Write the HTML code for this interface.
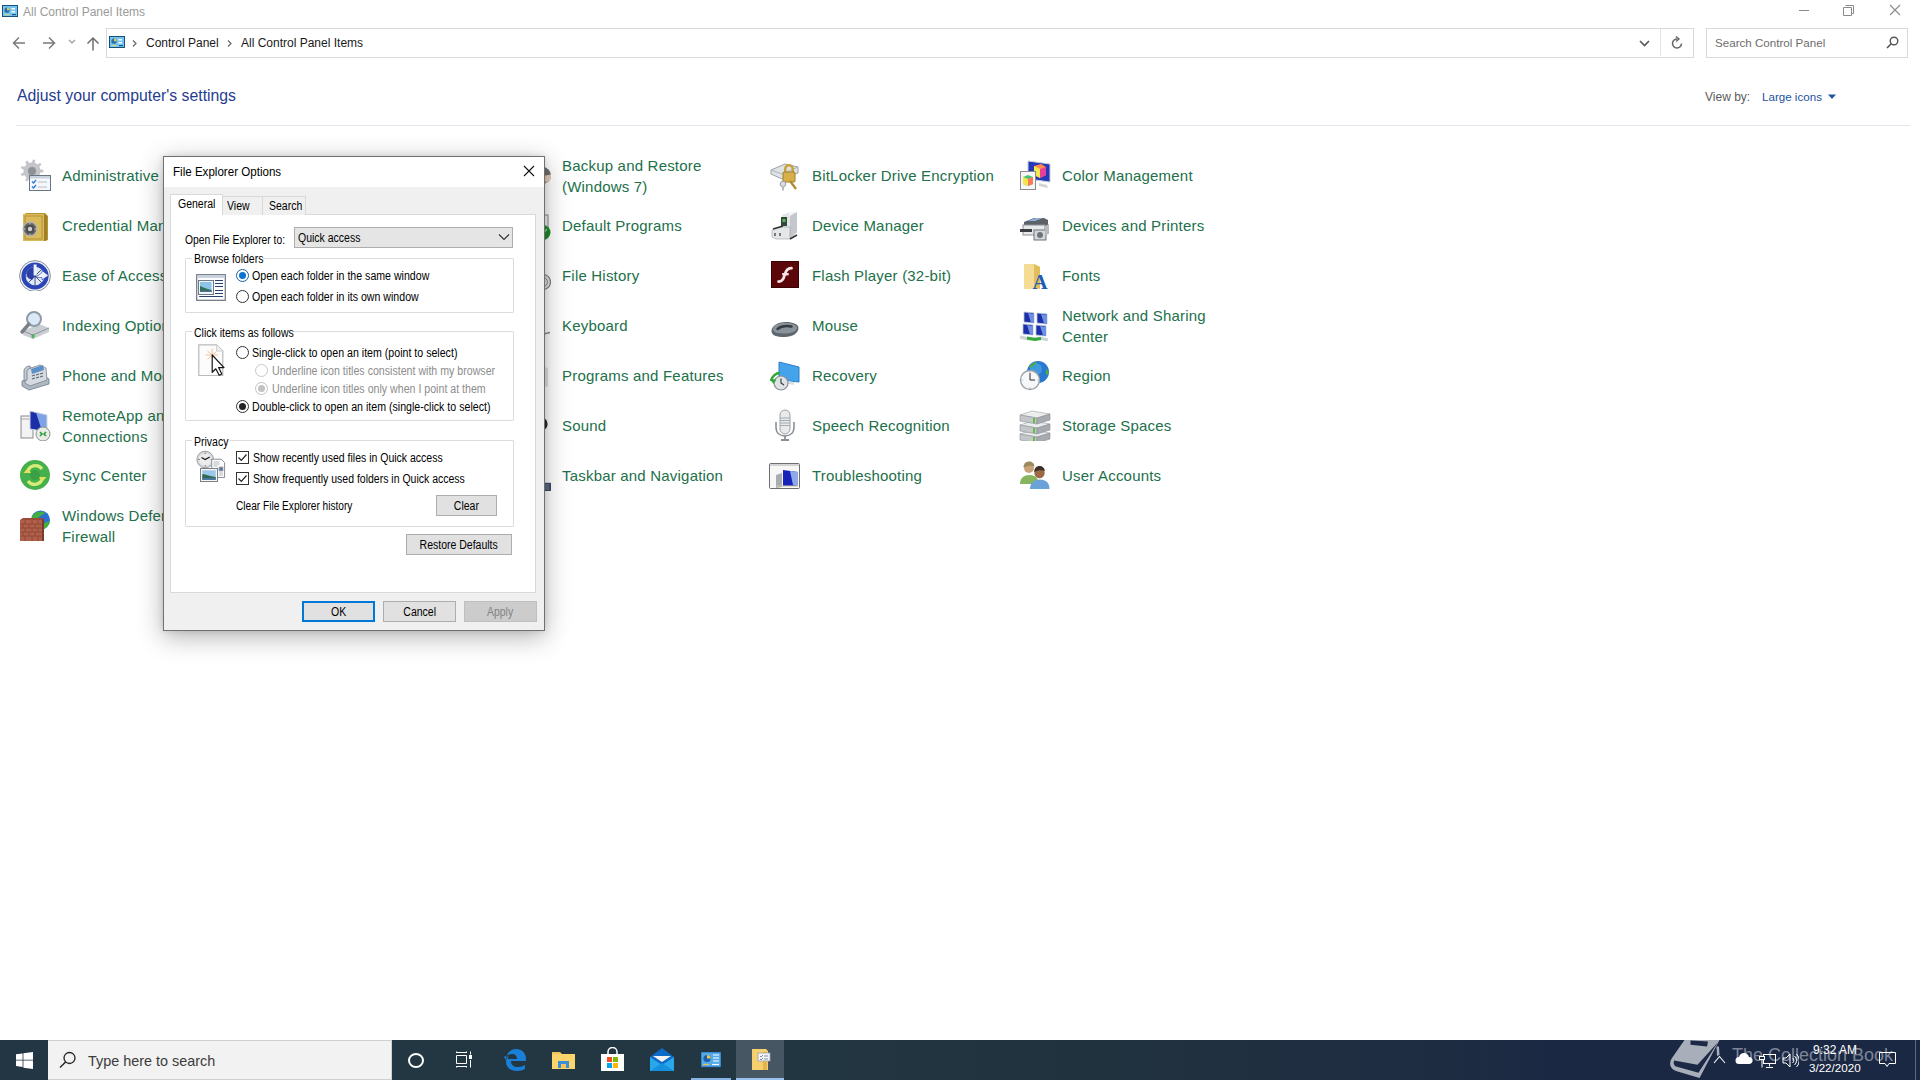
<!DOCTYPE html>
<html><head><meta charset="utf-8">
<style>
*{margin:0;padding:0;box-sizing:border-box}
html,body{width:1920px;height:1080px;overflow:hidden;background:#fff;font-family:"Liberation Sans",sans-serif;position:relative}
.a{position:absolute}
.nw{white-space:nowrap}
/* explorer chrome */
#title{left:23px;top:5px;font-size:12px;color:#9a9a9a}
.crumb{font-size:12px;color:#1a1a1a;top:36px}
#addr{left:106px;top:28px;width:1588px;height:30px;border:1px solid #d9d9d9}
#search{left:1706px;top:28px;width:202px;height:30px;border:1px solid #d9d9d9}
#heading{left:17px;top:87px;font-size:15.8px;color:#1f3d8f}
#sep{left:16px;top:125px;width:1894px;height:1px;background:#e2e6ec}
/* items */
.it{font-size:15px;color:#22704a;line-height:21px;white-space:nowrap;letter-spacing:.2px}
.ic{width:32px;height:32px}
/* dialog */
#dlg{left:163px;top:156px;width:382px;height:475px;background:#f0f0f0;border:1px solid #6f6f6f;box-shadow:0 4px 22px rgba(0,0,0,.28)}
.t{display:inline-block;transform:scaleX(.875);transform-origin:0 0;white-space:nowrap}
.d{font-size:12px;color:#000;line-height:15px}
.grp{border:1px solid #dcdcdc;border-radius:1px}
.glab{background:#fff;padding:0 2px}
.radio{width:13px;height:13px;border:1px solid #333;border-radius:50%;background:#fff}
.chk{width:13px;height:13px;border:1px solid #333;background:#fff}
.btn{border:1px solid #adadad;background:#e1e1e1;height:21px;text-align:center;font-size:12px;line-height:18px;color:#000}
.btn .t{transform-origin:50% 0}
/* taskbar */
#tb{left:0;top:1040px;width:1920px;height:40px;background:linear-gradient(90deg,#213642 0%,#213642 35%,#1f303f 65%,#1b2844 80%,#1b2844 100%)}
</style></head><body>

<!-- title bar -->
<svg class="a" style="left:2px;top:5px" width="16" height="12" viewBox="0 0 16 12"><rect x=".5" y=".5" width="15" height="11" fill="#74c4ef" stroke="#17507a"/><circle cx="5" cy="5.2" r="2.6" fill="#2f6fa8"/><path d="M5 5.2V2.6a2.6 2.6 0 0 1 2.6 2.6z" fill="#d8cf5a"/><rect x="9.5" y="3" width="3.5" height="1.5" fill="#fff"/><rect x="9.5" y="6" width="3.5" height="1.5" fill="#fff"/><rect x="2.5" y="9" width="5" height="1.2" fill="#c9d68a"/><rect x="10" y="9" width="4" height="1.2" fill="#1d5b95"/></svg>
<div id="title" class="a nw">All Control Panel Items</div>
<!-- window controls -->
<div class="a" style="left:1799px;top:10px;width:10px;height:1px;background:#8a8a8a"></div>
<svg class="a" style="left:1843px;top:5px" width="11" height="11" viewBox="0 0 11 11"><path d="M2.5 .5h8v8h-2M.5 2.5h8v8h-8z" fill="none" stroke="#8a8a8a"/></svg>
<svg class="a" style="left:1889px;top:4px" width="12" height="12" viewBox="0 0 12 12"><path d="M1 1l10 10M11 1L1 11" stroke="#8a8a8a" stroke-width="1.1"/></svg>

<!-- nav -->
<svg class="a" style="left:12px;top:36px" width="14" height="14" viewBox="0 0 14 14"><path d="M13 7H1.5M7 1.5L1.5 7 7 12.5" fill="none" stroke="#7a7a7a" stroke-width="1.5"/></svg>
<svg class="a" style="left:42px;top:36px" width="14" height="14" viewBox="0 0 14 14"><path d="M1 7h11.5M7 1.5L12.5 7 7 12.5" fill="none" stroke="#7a7a7a" stroke-width="1.5"/></svg>
<svg class="a" style="left:68px;top:39px" width="8" height="5" viewBox="0 0 8 5"><path d="M1 1l3 3 3-3" fill="none" stroke="#9a9a9a" stroke-width="1.2"/></svg>
<svg class="a" style="left:86px;top:36px" width="14" height="15" viewBox="0 0 14 15"><path d="M7 14.5V2M1.5 7.5L7 2l5.5 5.5" fill="none" stroke="#6f6f6f" stroke-width="1.5"/></svg>
<div id="addr" class="a"></div>
<svg class="a" style="left:109px;top:36px" width="16" height="12" viewBox="0 0 16 12"><rect x=".5" y=".5" width="15" height="11" fill="#74c4ef" stroke="#17507a"/><circle cx="5" cy="5.2" r="2.6" fill="#2f6fa8"/><path d="M5 5.2V2.6a2.6 2.6 0 0 1 2.6 2.6z" fill="#d8cf5a"/><rect x="9.5" y="3" width="3.5" height="1.5" fill="#fff"/><rect x="9.5" y="6" width="3.5" height="1.5" fill="#fff"/><rect x="2.5" y="9" width="5" height="1.2" fill="#c9d68a"/><rect x="10" y="9" width="4" height="1.2" fill="#1d5b95"/></svg>
<svg class="a" style="left:132px;top:40px" width="5" height="7" viewBox="0 0 5 7"><path d="M1 .5l3 3-3 3" fill="none" stroke="#666" stroke-width="1.2"/></svg>
<div class="a crumb nw" style="left:146px">Control Panel</div>
<svg class="a" style="left:227px;top:40px" width="5" height="7" viewBox="0 0 5 7"><path d="M1 .5l3 3-3 3" fill="none" stroke="#666" stroke-width="1.2"/></svg>
<div class="a crumb nw" style="left:241px">All Control Panel Items</div>
<svg class="a" style="left:1639px;top:40px" width="11" height="7" viewBox="0 0 11 7"><path d="M1 1l4.5 4.5L10 1" fill="none" stroke="#555" stroke-width="1.6"/></svg>
<div class="a" style="left:1660px;top:29px;width:1px;height:27px;background:#e3e3e3"></div>
<svg class="a" style="left:1671px;top:36px" width="13" height="14" viewBox="0 0 13 14"><path d="M10.5 7.5A4.5 4.5 0 1 1 6.5 3" fill="none" stroke="#666" stroke-width="1.5"/><path d="M5 0.5l3 2.5-3 2.5" fill="none" stroke="#666" stroke-width="1.4"/></svg>
<div id="search" class="a"></div>
<div class="a nw" style="left:1715px;top:36px;font-size:11.6px;color:#6d6d6d">Search Control Panel</div>
<svg class="a" style="left:1886px;top:36px" width="13" height="13" viewBox="0 0 13 13"><circle cx="8" cy="5" r="3.8" fill="none" stroke="#555" stroke-width="1.4"/><path d="M5.2 7.8L1 12" stroke="#555" stroke-width="1.6"/></svg>

<!-- heading -->
<div id="heading" class="a nw">Adjust your computer's settings</div>
<div class="a nw" style="left:1705px;top:90px;font-size:12px;color:#5c5c5c">View by:</div>
<div class="a nw" style="left:1762px;top:90px;font-size:11.6px;color:#2452a0">Large icons</div>
<svg class="a" style="left:1828px;top:93.5px" width="8" height="6" viewBox="0 0 8 6"><path d="M0 .5h8L4 5z" fill="#2452a0"/></svg>
<div id="sep" class="a"></div>

<!-- ITEMS -->
<!--ITEMS-->
<svg class="a" style="left:19px;top:159px" width="32" height="32" viewBox="0 0 32 32"><path d="M21.4 10.5 L24.4 10.8 L24.4 13.2 L21.4 13.5 L21.0 14.9 L20.4 16.2 L22.5 18.4 L21.0 20.3 L18.5 18.5 L17.2 19.4 L15.9 20.0 L16.2 23.1 L13.8 23.5 L13.0 20.5 L11.5 20.4 L10.1 20.0 L8.3 22.5 L6.2 21.3 L7.5 18.5 L6.5 17.5 L5.6 16.2 L2.7 17.0 L1.8 14.8 L4.6 13.5 L4.5 12.0 L4.6 10.5 L1.8 9.2 L2.7 7.0 L5.6 7.8 L6.5 6.5 L7.5 5.5 L6.2 2.7 L8.3 1.5 L10.1 4.0 L11.5 3.6 L13.0 3.5 L13.8 0.5 L16.2 0.9 L15.9 4.0 L17.2 4.6 L18.5 5.5 L21.0 3.7 L22.5 5.6 L20.4 7.7 L21.0 9.1Z" fill="#c3c5c8"/><circle cx="13" cy="12" r="4" fill="#8e9196"/>
<rect x="10.5" y="16.5" width="21" height="15" fill="#f4f7fb" stroke="#6a7482"/><rect x="11" y="17" width="20" height="2.5" fill="#c8d3e0"/><path d="M13 22.5l1.5 1.5 2.5-3M13 27.5l1.5 1.5 2.5-3" fill="none" stroke="#2e7bd0" stroke-width="1.3"/><path d="M19 23h9M19 28h9" stroke="#b5bec8"/></svg>
<div class="a it" style="left:62px;top:165px">Administrative Tools</div>
<svg class="a" style="left:19px;top:209px" width="32" height="32" viewBox="0 0 32 32"><path d="M4 6l3-2h19l3 3v24l-3 1H5l-1-1z" fill="#b8952f"/><rect x="4" y="5" width="21" height="27" fill="#d9bb5c"/><path d="M25 5l3 2v24l-3 1z" fill="#a17f26"/><rect x="6" y="7" width="17" height="23" fill="none" stroke="#b39133" stroke-width="1"/><circle cx="11" cy="20" r="7" fill="#6a6a6a" stroke="#b9b9b9" stroke-width="1.2"/><circle cx="11" cy="20" r="4.5" fill="#4d4d4d"/><circle cx="11" cy="20" r="2.2" fill="#d0d0d0"/><path d="M11 13.5v2M11 24.5v2M4.5 20h2M15.5 20h2" stroke="#d0d0d0" stroke-width="1"/></svg>
<div class="a it" style="left:62px;top:215px">Credential Manager</div>
<svg class="a" style="left:19px;top:259px" width="32" height="32" viewBox="0 0 32 32"><circle cx="16" cy="17" r="15.4" fill="#f4f6fb" stroke="#7b8089" stroke-width=".9"/><circle cx="16" cy="17" r="13.6" fill="#2b44b6"/><circle cx="16" cy="17" r="9.3" fill="#dfe8f7"/><path d="M16 17L16 7.7M16 17L22.6 10.4M16 17H25.3M16 17L22.6 23.6M16 17V26.3M16 17L9.4 23.6M16 17H6.7M16 17L9.4 10.4" stroke="#34466a" stroke-width=".9"/><path d="M16 17L9.4 10.4A9.3 9.3 0 0 1 16 7.7z" fill="#2a3fa8"/><path d="M16 17L9.4 10.4L7 14 9 19 13 21z" fill="#2a3fa8"/><rect x="14.6" y="5.5" width="3" height="11" fill="#eef2fc"/><path d="M16.5 18.5L23 13.5V11.5L29.5 16.5L23 21V18.5z" fill="#eef2fc" stroke="#2a3fa8" stroke-width=".6"/></svg>
<div class="a it" style="left:62px;top:265px">Ease of Access Center</div>
<svg class="a" style="left:19px;top:309px" width="32" height="32" viewBox="0 0 32 32"><path d="M4 22l16-7 10 4v4L14 30 4 26z" fill="#c9ced3"/><path d="M4 22l10 4 16-7" fill="none" stroke="#8d949b"/><path d="M14 26v4" stroke="#8d949b"/><rect x="12.5" y="25.5" width="3" height="3" fill="#3dbb3d"/><circle cx="15" cy="10" r="7" fill="#dbe9f6" stroke="#8d9aa8" stroke-width="2"/><path d="M10 15L3 23" stroke="#7b8188" stroke-width="3.5" stroke-linecap="round"/></svg>
<div class="a it" style="left:62px;top:315px">Indexing Options</div>
<svg class="a" style="left:19px;top:359px" width="32" height="32" viewBox="0 0 32 32"><path d="M3 22l20-6 7 4v5l-20 6-7-4z" fill="#aeb8c2" stroke="#6f7b87" stroke-width=".8"/><path d="M6 11l15-5 6 3 1 12-17 6-5-3z" fill="#d5dbe1" stroke="#7a8590" stroke-width=".8"/><path d="M12 10l12-4 1 5-12 4z" fill="#5c8fc7"/><path d="M5 12c0-3 3-5 6-5l1 2c-2 0-4 2-4 3v9l-3 1z" fill="#c3cad1" stroke="#6f7b87" stroke-width=".8"/><path d="M13 17l3-1M17 16l3-1M21 15l3-1M13 20l3-1M17 19l3-1M21 18l3-1" stroke="#5d6772" stroke-width="1.2"/></svg>
<div class="a it" style="left:62px;top:365px">Phone and Modem</div>
<svg class="a" style="left:19px;top:409px" width="32" height="32" viewBox="0 0 32 32"><rect x="2" y="7" width="12" height="22" fill="#f3f3f3" stroke="#8a8a8a"/><path d="M2 10h12" stroke="#aaa"/><path d="M11 2l17 4v17l-17-3z" fill="#1c2fa8"/><path d="M17 3.5l11 2.5v17l-5-1z" fill="#7fa2e6"/><path d="M11 2l17 4v17l-17-3z" fill="none" stroke="#cfd6e2"/><circle cx="24" cy="25" r="7" fill="#e7ece7" stroke="#8c958c"/><path d="M21 27l2-2-2-2M27 23l-2 2 2 2" fill="none" stroke="#2f9b37" stroke-width="1.6"/></svg>
<div class="a it" style="left:62px;top:405px">RemoteApp and Desktop<br>Connections</div>
<svg class="a" style="left:19px;top:459px" width="32" height="32" viewBox="0 0 32 32"><circle cx="16" cy="16" r="15" fill="#45b04c"/><path d="M8.5 14a8 8 0 0 1 14.5-4" fill="none" stroke="#d6ec78" stroke-width="3.2"/><path d="M23.5 18a8 8 0 0 1-14.5 4" fill="none" stroke="#d6ec78" stroke-width="3.2"/><path d="M4.5 14h8l-4 -4.5z" fill="#e6e15a"/><path d="M27.5 18h-8l4 4.5z" fill="#e6e15a"/><circle cx="16" cy="16" r="5" fill="#3aa043"/></svg>
<div class="a it" style="left:62px;top:465px">Sync Center</div>
<svg class="a" style="left:19px;top:509px" width="32" height="32" viewBox="0 0 32 32"><circle cx="21.5" cy="11" r="9.5" fill="#2c6fd2"/><path d="M13 7c3-4 9-6 13-3-2 2-4 2-6 4-2 1-1 4-4 5-2-1-3-4-3-6z" fill="#41b03f"/><path d="M25 14c2-1 4-1 6-2-1 4-3 7-6 8z" fill="#41b03f"/><path d="M1 11l3-2h20l1 1v22l-3 0H1z" fill="#9a4a36"/><rect x="1" y="11" width="22" height="21" fill="#b0604a"/><path d="M23 11l2-1.5v21.5l-2 1z" fill="#7b3b2b"/><path d="M1 15h22M1 19h22M1 23h22M1 27h22M6 11v4M13 11v4M19 11v4M4 15v4M10 15v4M16 15v4M6 19v4M13 19v4M19 19v4M4 23v4M10 23v4M16 23v4M6 27v5M13 27v5M19 27v5" stroke="#8a4533" stroke-width=".8"/></svg>
<div class="a it" style="left:62px;top:505px">Windows Defender<br>Firewall</div>
<svg class="a" style="left:519px;top:159px" width="32" height="32" viewBox="0 0 32 32"><circle cx="23.5" cy="16.5" r="8.5" fill="#6e6e6e"/><path d="M24 17l8-1.5a8.5 8.5 0 0 1-5 8.5z" fill="#e8cdb8"/></svg>
<div class="a it" style="left:562px;top:155px">Backup and Restore<br>(Windows 7)</div>
<svg class="a" style="left:519px;top:209px" width="32" height="32" viewBox="0 0 32 32"><rect x="14" y="6" width="15" height="15" fill="#f4f4f4" stroke="#8a8a8a"/><path d="M17 9h9M17 12h9M17 15h9" stroke="#aaa"/><circle cx="24" cy="23.5" r="7.5" fill="#1e8e2a"/><path d="M21 22l3 3 4-5" fill="none" stroke="#8fe08f" stroke-width="1.3"/></svg>
<div class="a it" style="left:562px;top:215px">Default Programs</div>
<svg class="a" style="left:519px;top:259px" width="32" height="32" viewBox="0 0 32 32"><circle cx="24" cy="23" r="7.5" fill="#e6e6e6" stroke="#7d7d7d" stroke-width="1.2"/><circle cx="24" cy="23" r="4.5" fill="none" stroke="#8a8a8a" stroke-width="1"/></svg>
<div class="a it" style="left:562px;top:265px">File History</div>
<svg class="a" style="left:519px;top:309px" width="32" height="32" viewBox="0 0 32 32"><path d="M18 26.5l13-3" stroke="#8d8d8d" stroke-width="1.4"/></svg>
<div class="a it" style="left:562px;top:315px">Keyboard</div>
<svg class="a" style="left:519px;top:359px" width="32" height="32" viewBox="0 0 32 32"><path d="M25 8l4 1v19l-4-1z" fill="#e2e2e2"/></svg>
<div class="a it" style="left:562px;top:365px">Programs and Features</div>
<svg class="a" style="left:519px;top:409px" width="32" height="32" viewBox="0 0 32 32"><circle cx="22" cy="15" r="6.6" fill="#2b2b2b"/></svg>
<div class="a it" style="left:562px;top:415px">Sound</div>
<svg class="a" style="left:519px;top:459px" width="32" height="32" viewBox="0 0 32 32"><rect x="20" y="23.8" width="12" height="9" fill="#3f4f66"/><rect x="22" y="25" width="8" height="6" fill="#5c6e86"/></svg>
<div class="a it" style="left:562px;top:465px">Taskbar and Navigation</div>
<svg class="a" style="left:769px;top:159px" width="32" height="32" viewBox="0 0 32 32"><path d="M2 11l14-6 13 3v6L13 20 2 15z" fill="#dfe3e6" stroke="#9aa1a7"/><path d="M2 11l11 4 16-7" fill="none" stroke="#aeb4b9"/><path d="M15 10a5 5 0 0 1 10 0v4h-2.5v-4a2.5 2.5 0 0 0-5 0v4H15z" fill="#c9a23c"/><rect x="14" y="13" width="12" height="10" rx="1" fill="#d8b04a" stroke="#a07f25"/><circle cx="14" cy="25" r="2.8" fill="#d8dcdf" stroke="#9aa1a7"/><path d="M14 27v4.5" stroke="#b6bcc1" stroke-width="2"/><path d="M21 22l6 8" stroke="#b08a2c" stroke-width="2.2"/></svg>
<div class="a it" style="left:812px;top:165px">BitLocker Drive Encryption</div>
<svg class="a" style="left:769px;top:209px" width="32" height="32" viewBox="0 0 32 32"><path d="M13 6l8-3h7v20l-8 7h-4z" fill="#e3e5e8"/><path d="M20 3h8l-8 4z" fill="#f4f5f6"/><path d="M21 7l7-4v20l-7 7z" fill="#c4c8cc"/><path d="M3 21l10-3h8v12H7l-4-2z" fill="#e4e6e8" stroke="#9aa0a6" stroke-width=".6"/><rect x="12" y="8" width="6" height="9" fill="#334a3a"/><rect x="13.5" y="10" width="3" height="3" fill="#5fb85f"/><path d="M6 24v3M11 24v3" stroke="#555" stroke-width="1.5"/><path d="M21 30l7-4" stroke="#333" stroke-width="1.5"/><path d="M4 20l10-3" stroke="#333" stroke-width="1.5"/></svg>
<div class="a it" style="left:812px;top:215px">Device Manager</div>
<svg class="a" style="left:769px;top:259px" width="32" height="32" viewBox="0 0 32 32"><rect x="2" y="2" width="28" height="27" fill="#5b0608"/><rect x="2.5" y="2.5" width="27" height="26" fill="none" stroke="#3a0406"/><path d="M22.5 9.2C18 9 16.6 12 15.5 16.5 14.4 21 12.5 22.6 9.5 22.6" fill="none" stroke="#f7e4e4" stroke-width="2.8" stroke-linecap="round"/><path d="M13.2 15.2h6.5" stroke="#f7e4e4" stroke-width="2.4"/></svg>
<div class="a it" style="left:812px;top:265px">Flash Player (32-bit)</div>
<svg class="a" style="left:769px;top:309px" width="32" height="32" viewBox="0 0 32 32"><path d="M2.5 22c0-5 6-9 14-9s13 2.5 13 6c0 5-6 9-14 9S2.5 26.5 2.5 22z" fill="#5e666e"/><path d="M4 20.5c0-4 5-6.5 12-6.5s12 2 12 4.5c0 3.5-5 6-12 6S4 23.5 4 20.5z" fill="#8a939c"/><path d="M8.5 20c3-2.5 9-3.5 14-2.5" stroke="#353b41" stroke-width="2.4" fill="none" stroke-linecap="round"/></svg>
<div class="a it" style="left:812px;top:315px">Mouse</div>
<svg class="a" style="left:769px;top:359px" width="32" height="32" viewBox="0 0 32 32"><path d="M10 3l20 5v15l-20-2z" fill="#45a3ec"/><path d="M10 3l20 5v15l-20-2z" fill="none" stroke="#2c7fc9"/><path d="M19 22l6 1v3l-6-1z" fill="#d9dde1"/><circle cx="12" cy="24" r="7" fill="#dfe3e7" stroke="#8a9097" stroke-width="1.2"/><path d="M12 19.5V24l3 2" fill="none" stroke="#333" stroke-width="1.1"/><path d="M2 22c1-5 5-8 9-8" fill="none" stroke="#2da836" stroke-width="2.5"/><path d="M1 20l3.5 5 3-4.5z" fill="#2da836"/></svg>
<div class="a it" style="left:812px;top:365px">Recovery</div>
<svg class="a" style="left:769px;top:409px" width="32" height="32" viewBox="0 0 32 32"><path d="M7 13v5c0 6 4 9 9 9s9-3 9-9v-5" fill="none" stroke="#8c9095" stroke-width="1.6"/><rect x="11" y="1" width="10" height="24" rx="5" fill="#e8eaec" stroke="#9ea3a8"/><path d="M11 9h10M11 11.5h10M11 14h10M11 16.5h10" stroke="#9ea3a8" stroke-width=".9"/><path d="M16 27v4M12 31h8" stroke="#8c9095" stroke-width="1.8"/></svg>
<div class="a it" style="left:812px;top:415px">Speech Recognition</div>
<svg class="a" style="left:769px;top:459px" width="32" height="32" viewBox="0 0 32 32"><rect x=".5" y="4.5" width="30" height="25" rx="1" fill="#f7f7f7" stroke="#6e6e6e"/><path d="M1 6h29" stroke="#c7c7c7" stroke-width="1.5"/><path d="M14 11l15 2v14H14z" fill="#1523b8"/><path d="M21 12l8 1v14l-5-1z" fill="#8ea8ea"/><path d="M7 16l6-2v14l-6 1z" fill="#a9adb2"/><path d="M7 27l22 0" stroke="#d5c79a"/></svg>
<div class="a it" style="left:812px;top:465px">Troubleshooting</div>
<svg class="a" style="left:1019px;top:159px" width="32" height="32" viewBox="0 0 32 32"><path d="M9 2l22 3v18l-22-3z" fill="#2438b8" stroke="#c9ced6"/><path d="M15 7l7-2 5 3v8l-6 3-6-3z" fill="#ff8c4a"/><path d="M15 7l6 3v9l-6-3z" fill="#f2e94c"/><path d="M21 10l6-2v8l-6 3z" fill="#e83f9a"/><path d="M20 24l8 2 1 3-9-2z" fill="#cfd3d8"/><rect x="1.5" y="12.5" width="15" height="18" fill="#f6f6f6" stroke="#8b8b8b"/><path d="M4 18l5-2 5 2v7l-5 2-5-2z" fill="#49c47a"/><path d="M4 18l5 2v7l-5-2z" fill="#f5e54a"/><path d="M9 20l5-2v7l-5 2z" fill="#ff7a59"/></svg>
<div class="a it" style="left:1062px;top:165px">Color Management</div>
<svg class="a" style="left:1019px;top:209px" width="32" height="32" viewBox="0 0 32 32"><path d="M5 13l10-4h10l4 2v6H5z" fill="#5d6268"/><path d="M8 12l9-3h7l-8 3z" fill="#8fb2d6"/><rect x="4" y="16" width="22" height="10" fill="#e7e9eb" stroke="#8b9096"/><rect x="1" y="20" width="12" height="3" fill="#3a3f44"/><rect x="15" y="21" width="12" height="10" fill="#d5d8db" stroke="#6f747a"/><circle cx="21" cy="26" r="3" fill="#6f747a"/><path d="M26 17l4-2v10l-4 1z" fill="#b7bbc0"/></svg>
<div class="a it" style="left:1062px;top:215px">Devices and Printers</div>
<svg class="a" style="left:1019px;top:259px" width="32" height="32" viewBox="0 0 32 32"><path d="M5 5h10l6 3v21.5l-6 .5H5z" fill="#f1d27c"/><path d="M5 5h10v25H5z" fill="#f5dc94"/><path d="M15 5l6 3v21.5l-6 .5z" fill="#e2bd5c"/><text x="21" y="29.6" font-family="Liberation Serif" font-weight="bold" font-size="21" text-anchor="middle" fill="#1d5db4">A</text></svg>
<div class="a it" style="left:1062px;top:265px">Fonts</div>
<svg class="a" style="left:1019px;top:309px" width="32" height="32" viewBox="0 0 32 32"><path d="M5 3l10 1v10l-10-1z" fill="#1b2fa8" stroke="#b8c2d6" stroke-width=".8"/><path d="M18 4l10 1v10l-10-1z" fill="#1b2fa8" stroke="#b8c2d6" stroke-width=".8"/><path d="M4 15l10 1v10l-10-1z" fill="#1b2fa8" stroke="#b8c2d6" stroke-width=".8"/><path d="M17 16l10 1v10l-10-1z" fill="#1b2fa8" stroke="#b8c2d6" stroke-width=".8"/><path d="M9 4l6 1v9l-3-.5zM22 5l6 1v9l-3-.5zM8 16l6 1v9l-3-.5zM21 17l6 1v9l-3-.5z" fill="#6f8fe0"/><path d="M1 28c4 1 8 2 12 2l8-1 8 2" fill="none" stroke="#cfd3d8" stroke-width="3"/><path d="M8 29l8 1.5 6-1" fill="none" stroke="#35a83c" stroke-width="3"/></svg>
<div class="a it" style="left:1062px;top:305px">Network and Sharing<br>Center</div>
<svg class="a" style="left:1019px;top:359px" width="32" height="32" viewBox="0 0 32 32"><circle cx="19" cy="13" r="11" fill="#2a78d0"/><circle cx="17" cy="10" r="6" fill="#4fb0ea" opacity=".6"/><path d="M10 8c2-3 5-5 8-5-1 2-3 3-5 5-1 1-2 1-3 0zM27 10c2 1 3 3 3 5-1 1-2 1-3 0z" fill="#49b042"/><circle cx="11" cy="21" r="9.5" fill="#f6f7f9" stroke="#9aa1a8" stroke-width="1.3"/><path d="M11 14v7h5" fill="none" stroke="#2a2a2a" stroke-width="1"/><path d="M11 12.5v1M11 28.5v1M2.5 21h1M18.5 21h1" stroke="#888" stroke-width=".8"/></svg>
<div class="a it" style="left:1062px;top:365px">Region</div>
<svg class="a" style="left:1019px;top:409px" width="32" height="32" viewBox="0 0 32 32"><path d="M1 25l12-4 18 3-13 4z" fill="#eceded" stroke="#9a9fa4" stroke-width=".6"/><path d="M1 25l17 3v6L1 31z" fill="#c4c7ca" stroke="#8a8f94" stroke-width=".6"/><path d="M18 28l13-4v6l-13 4z" fill="#a7abaf" stroke="#8a8f94" stroke-width=".6"/><path d="M15 28v5" stroke="#5fbf3f" stroke-width="2"/><path d="M1 16l12-4 18 3-13 4z" fill="#eceded" stroke="#9a9fa4" stroke-width=".6"/><path d="M1 16l17 3v6L1 22z" fill="#c4c7ca" stroke="#8a8f94" stroke-width=".6"/><path d="M18 19l13-4v6l-13 4z" fill="#a7abaf" stroke="#8a8f94" stroke-width=".6"/><path d="M15 19v5" stroke="#5fbf3f" stroke-width="2"/><path d="M1 6l12-4 18 3-13 4z" fill="#eceded" stroke="#9a9fa4" stroke-width=".6"/><path d="M1 6l17 3v6L1 12z" fill="#c4c7ca" stroke="#8a8f94" stroke-width=".6"/><path d="M18 9l13-4v6l-13 4z" fill="#a7abaf" stroke="#8a8f94" stroke-width=".6"/><path d="M15 9v5" stroke="#5fbf3f" stroke-width="2"/></svg>
<div class="a it" style="left:1062px;top:415px">Storage Spaces</div>
<svg class="a" style="left:1019px;top:459px" width="32" height="32" viewBox="0 0 32 32"><circle cx="10" cy="9" r="5" fill="#c9a27a"/><path d="M4.5 8.5c0-4 2.5-6 5.5-6s5.5 2 5.5 5c-2-1-6-1-11 1z" fill="#9b8a5c"/><path d="M1 25c0-6 4-9 9.5-9s9 3 9 9z" fill="#86b55e"/><circle cx="20.5" cy="14" r="5.2" fill="#9b6a45"/><path d="M15.2 13c0-4 2.5-6 5.3-6s5.3 2 5.3 5c-3-1-7-1-10.6 1z" fill="#3c3027"/><path d="M11 30c0-6 4-9.5 10-9.5s9.5 3.5 9.5 9.5z" fill="#6aa3d8"/></svg>
<div class="a it" style="left:1062px;top:465px">User Accounts</div>
<!--/ITEMS-->

<!-- DIALOG -->
<!--DLG-->
<div class="a" style="left:163px;top:156px;width:382px;height:475px;background:#f0f0f0;border:1px solid #707070;box-shadow:0 6px 24px rgba(0,0,0,.30),0 0 6px rgba(0,0,0,.12)"></div>
<div class="a" style="left:164px;top:157px;width:380px;height:30px;background:#fff"></div>
<div class="a d" style="left:172.5px;top:165.0px;color:#000;font-size:12px"><span class="t" style="transform:scaleX(0.965)">File Explorer Options</span></div>
<svg class="a" style="left:523px;top:165px" width="12" height="12" viewBox="0 0 12 12"><path d="M1 1l10 10M11 1L1 11" stroke="#111" stroke-width="1.1"/></svg>
<div class="a" style="left:170px;top:214px;width:366px;height:379px;background:#fff;border:1px solid #d9d9d9"></div>
<div class="a" style="left:222px;top:196px;width:41px;height:19px;background:#f0f0f0;border:1px solid #d9d9d9;border-bottom:none"></div>
<div class="a" style="left:262px;top:196px;width:44px;height:19px;background:#f0f0f0;border:1px solid #d9d9d9;border-bottom:none"></div>
<div class="a" style="left:170px;top:194px;width:53px;height:21px;background:#fff;border:1px solid #d9d9d9;border-bottom:none"></div>
<div class="a d" style="left:177.5px;top:197.0px;color:#000;font-size:12px"><span class="t" style="transform:scaleX(0.875)">General</span></div>
<div class="a d" style="left:227.2px;top:199.1px;color:#000;font-size:12px"><span class="t" style="transform:scaleX(0.875)">View</span></div>
<div class="a d" style="left:269.4px;top:199.1px;color:#000;font-size:12px"><span class="t" style="transform:scaleX(0.875)">Search</span></div>
<div class="a d" style="left:185px;top:232.5px;color:#000;font-size:12px"><span class="t" style="transform:scaleX(0.857)">Open File Explorer to:</span></div>
<div class="a" style="left:294px;top:227px;width:219px;height:21px;background:#e5e5e5;border:1px solid #adadad"></div>
<div class="a d" style="left:298px;top:231.0px;color:#000;font-size:12px"><span class="t" style="transform:scaleX(0.875)">Quick access</span></div>
<svg class="a" style="left:498px;top:233px" width="12" height="8" viewBox="0 0 12 8"><path d="M1 1.5l5 5 5-5" fill="none" stroke="#333" stroke-width="1.1"/></svg>
<div class="a grp" style="left:185px;top:258px;width:329px;height:55px"></div>
<div class="a" style="left:192px;top:255px;width:71px;height:7px;background:#fff"></div>
<div class="a d" style="left:194px;top:252.1px;color:#000;font-size:12px"><span class="t" style="transform:scaleX(0.875)">Browse folders</span></div>
<div class="a grp" style="left:185px;top:331px;width:329px;height:90px"></div>
<div class="a" style="left:192px;top:328px;width:101px;height:7px;background:#fff"></div>
<div class="a d" style="left:194px;top:325.5px;color:#000;font-size:12px"><span class="t" style="transform:scaleX(0.875)">Click items as follows</span></div>
<div class="a grp" style="left:185px;top:440px;width:329px;height:87px"></div>
<div class="a" style="left:192px;top:437px;width:38px;height:7px;background:#fff"></div>
<div class="a d" style="left:194px;top:434.5px;color:#000;font-size:12px"><span class="t" style="transform:scaleX(0.875)">Privacy</span></div>
<div class="a" style="left:236.0px;top:269.0px;width:13px;height:13px;border-radius:50%;border:1px solid #1d5f98;background:#fff"></div>
<div class="a" style="left:239.0px;top:272.0px;width:7px;height:7px;border-radius:50%;background:#0b74d0"></div>
<div class="a d" style="left:252px;top:269.3px;color:#000;font-size:12px"><span class="t" style="transform:scaleX(0.883)">Open each folder in the same window</span></div>
<div class="a" style="left:236.0px;top:290.0px;width:13px;height:13px;border-radius:50%;border:1px solid #333;background:#fff"></div>
<div class="a d" style="left:252px;top:290.3px;color:#000;font-size:12px"><span class="t" style="transform:scaleX(0.883)">Open each folder in its own window</span></div>
<div class="a" style="left:236.0px;top:345.5px;width:13px;height:13px;border-radius:50%;border:1px solid #333;background:#fff"></div>
<div class="a d" style="left:252.2px;top:345.8px;color:#000;font-size:12px"><span class="t" style="transform:scaleX(0.885)">Single-click to open an item (point to select)</span></div>
<div class="a" style="left:255.0px;top:363.5px;width:13px;height:13px;border-radius:50%;border:1px solid #c8c8c8;background:#fff"></div>
<div class="a d" style="left:271.7px;top:363.5px;color:#8d8d8d;font-size:12px"><span class="t" style="transform:scaleX(0.885)">Underline icon titles consistent with my browser</span></div>
<div class="a" style="left:255.0px;top:381.5px;width:13px;height:13px;border-radius:50%;border:1px solid #c2c2c2;background:#fff"></div>
<div class="a" style="left:258.0px;top:384.5px;width:7px;height:7px;border-radius:50%;background:#c2c2c2"></div>
<div class="a d" style="left:271.7px;top:381.5px;color:#8d8d8d;font-size:12px"><span class="t" style="transform:scaleX(0.885)">Underline icon titles only when I point at them</span></div>
<div class="a" style="left:236.0px;top:399.5px;width:13px;height:13px;border-radius:50%;border:1px solid #333;background:#fff"></div>
<div class="a" style="left:239.0px;top:402.5px;width:7px;height:7px;border-radius:50%;background:#222"></div>
<div class="a d" style="left:252.2px;top:399.8px;color:#000;font-size:12px"><span class="t" style="transform:scaleX(0.885)">Double-click to open an item (single-click to select)</span></div>
<div class="a" style="left:236px;top:451px;width:13px;height:13px;border:1px solid #333;background:#fff"></div>
<svg class="a" style="left:236px;top:451px" width="13" height="13" viewBox="0 0 13 13"><path d="M2.5 6.5l2.8 2.8L10.5 3.5" fill="none" stroke="#222" stroke-width="1.2"/></svg>
<div class="a d" style="left:252.6px;top:451.4px;color:#000;font-size:12px"><span class="t" style="transform:scaleX(0.875)">Show recently used files in Quick access</span></div>
<div class="a" style="left:236px;top:472px;width:13px;height:13px;border:1px solid #333;background:#fff"></div>
<svg class="a" style="left:236px;top:472px" width="13" height="13" viewBox="0 0 13 13"><path d="M2.5 6.5l2.8 2.8L10.5 3.5" fill="none" stroke="#222" stroke-width="1.2"/></svg>
<div class="a d" style="left:252.6px;top:472.1px;color:#000;font-size:12px"><span class="t" style="transform:scaleX(0.875)">Show frequently used folders in Quick access</span></div>
<div class="a d" style="left:236px;top:499.2px;color:#000;font-size:12px"><span class="t" style="transform:scaleX(0.843)">Clear File Explorer history</span></div>
<div class="a" style="left:436px;top:495px;width:61px;height:21px;border:1px solid #adadad;background:#e1e1e1"></div>
<div class="a d" style="left:406.5px;top:499.3px;width:120px;text-align:center;color:#000"><span class="t" style="transform:scaleX(.875);transform-origin:50% 0">Clear</span></div>
<div class="a" style="left:406px;top:534px;width:106px;height:21px;border:1px solid #adadad;background:#e1e1e1"></div>
<div class="a d" style="left:399.0px;top:538.3px;width:120px;text-align:center;color:#000"><span class="t" style="transform:scaleX(.875);transform-origin:50% 0">Restore Defaults</span></div>
<div class="a" style="left:302px;top:601px;width:73px;height:21px;border:2px solid #0078d7;background:#e1e1e1"></div>
<div class="a d" style="left:278.5px;top:605.3px;width:120px;text-align:center;color:#000"><span class="t" style="transform:scaleX(.875);transform-origin:50% 0">OK</span></div>
<div class="a" style="left:383px;top:601px;width:73px;height:21px;border:1px solid #adadad;background:#e1e1e1"></div>
<div class="a d" style="left:359.5px;top:605.3px;width:120px;text-align:center;color:#000"><span class="t" style="transform:scaleX(.875);transform-origin:50% 0">Cancel</span></div>
<div class="a" style="left:464px;top:601px;width:73px;height:21px;border:1px solid #bfbfbf;background:#cccccc"></div>
<div class="a d" style="left:440.5px;top:605.3px;width:120px;text-align:center;color:#838383"><span class="t" style="transform:scaleX(.875);transform-origin:50% 0">Apply</span></div>
<svg class="a" style="left:196px;top:274px" width="30" height="27" viewBox="0 0 30 27"><rect x=".7" y=".7" width="28.6" height="25.6" fill="#fbfcfe" stroke="#6e747c" stroke-width="1.2"/><rect x="1.3" y="1.3" width="27.4" height="2.6" fill="#c6d0dc"/><rect x="2.5" y="6.5" width="15" height="14" fill="#eef4f8" stroke="#707a84"/><path d="M4 8h11.5v10H4z" fill="#8cc3e6"/><path d="M4 12c3 1 6 3 11.5 4v2H4z" fill="#2f6f54"/><path d="M4 16.5h11.5V18H4z" fill="#4a6f90"/><path d="M19 6.5h8M19 9.5h8M19 12.5h8M19 16.5h8M19 19.5h8M3.2 22.5h23.7" stroke="#2f3f6c" stroke-width="1"/></svg>
<svg class="a" style="left:198px;top:343px" width="28" height="34" viewBox="0 0 28 34"><path d="M.8 1.8H18.5L24.8 8V32.5H.8Z" fill="#fcfcfc" stroke="#b9b9b9" stroke-width="1.2"/><path d="M18.5 1.8V8H24.8" fill="#eee" stroke="#c9c9c9" stroke-width=".8"/><path d="M14.2 12V5.5M14.2 12H7.5M14.2 12L9.5 8M14.2 12L9.5 16.5M14.2 12L18.5 8.5M14.2 12H20" stroke="#f3c39c" stroke-width="1"/><path d="M14.2 12V29.3L17.8 25.8L21.2 32.2L23.8 31L20.6 24.6H26Z" fill="#fff" stroke="#151515" stroke-width="1.2" stroke-linejoin="round"/></svg>
<svg class="a" style="left:195px;top:450px" width="32" height="33" viewBox="0 0 32 33"><circle cx="10.2" cy="9.5" r="8.3" fill="#d9dadc" stroke="#9a9ea3" stroke-width="1"/><circle cx="10.2" cy="9.5" r="6.3" fill="#ececed"/><path d="M10.2 2.5v1.6M10.2 15v1.6M3.2 9.5h1.6M15.6 9.5h1.6" stroke="#777" stroke-width="1"/><path d="M6.5 7.5l3.7 2 4.5-2.5" fill="none" stroke="#1a1a1a" stroke-width="1.3"/><path d="M16.7 9.2h9.5l3.4 3.4v14.9H16.7Z" fill="#fbfbfb" stroke="#8c8f94"/><path d="M18.5 12h6M18.5 14h6M18.5 16h4M24 17h4v4h-4z" stroke="#a3a9b3" stroke-width=".8" fill="#5c7a9a"/><path d="M24 23h4M24 25h4" stroke="#a3a9b3" stroke-width=".8"/><rect x="5.5" y="18.5" width="17" height="13" fill="#f4f6f8" stroke="#7b7f85"/><path d="M7.3 20.3h13.4v9.4H7.3z" fill="#9cc6ea"/><path d="M7.3 24c3 .5 7 2 13.4 3v2.7H7.3z" fill="#2f6a50"/><path d="M7.3 28h13.4v1.7H7.3z" fill="#4d74a8"/></svg>
<!--/DLG-->

<!-- TASKBAR -->
<!--TB-->
<div class="a" style="left:0;top:1040px;width:1920px;height:40px;background:linear-gradient(90deg,#223743 0px,#223742 700px,#21323f 1100px,#1e2c42 1450px,#1b2844 1560px,#1b2844 1920px)"></div>
<svg class="a" style="left:16px;top:1052px" width="17" height="17" viewBox="0 0 17 17"><path d="M0 2.3l6.6-.9v6.4H0zM7.4 1.3L17 0v7.8H7.4zM0 8.6h6.6V15L0 14.1zM7.4 8.6H17V17l-9.6-1.3z" fill="#fff"/></svg>
<div class="a" style="left:48px;top:1040px;width:344px;height:40px;background:#f2f2f2;border:1px solid #cfcfcf;border-left:none"></div>
<svg class="a" style="left:59px;top:1051px" width="18" height="18" viewBox="0 0 18 18"><circle cx="10.5" cy="7" r="5.5" fill="none" stroke="#222" stroke-width="1.3"/><path d="M6.6 10.9L1 16.5" stroke="#222" stroke-width="1.4"/></svg>
<div class="a nw" style="left:88px;top:1052.5px;font-size:14.4px;color:#3b3b3b">Type here to search</div>
<div class="a" style="left:408px;top:1053px;width:16px;height:15px;border-radius:50%;border:2px solid #fff"></div>
<svg class="a" style="left:455px;top:1051px" width="18" height="17" viewBox="0 0 18 17"><path d="M1.5 1.5h10M1.5 15.5h10M1.5 4.5h10v8h-10z" fill="none" stroke="#fff" stroke-width="1"/><path d="M1.5 .5v1.5M11.5 .5v1.5M1.5 15v1.5M11.5 15v1.5" stroke="#fff" stroke-width="1"/><path d="M15.5 .5v3M15.5 9v7.5" stroke="#fff" stroke-width="1"/><rect x="14" y="4" width="3" height="4" fill="#fff"/></svg>
<svg class="a" style="left:504px;top:1048px" width="22" height="23" viewBox="0 0 22 23"><path d="M2 12C2 5 7 1 12 1c6 0 10 4 10 10v2H7c0 4 3 6 7 6 3 0 5-1 7-2v4c-2 1-5 2-8 2-7 0-11-4-11-9 0-3 1-5 3-7-1 2-1 3-1 4h9c0-3-2-5-5-5-2 0-5 1-8 3z" fill="#1a7fd6"/></svg>
<svg class="a" style="left:552px;top:1050px" width="23" height="19" viewBox="0 0 23 19"><path d="M0 2h8l2 2h13v15H0z" fill="#f4c45a"/><path d="M0 4h23v15H0z" fill="#fbd46b"/><path d="M6 18v-7h11v7h-3v-4H9v4z" fill="#3b8fd8"/><rect x="9" y="14" width="5" height="4" fill="#f4c45a"/></svg>
<svg class="a" style="left:600px;top:1047px" width="25" height="25" viewBox="0 0 25 25"><path d="M8 7V5a4.5 4.5 0 0 1 9 0v2" fill="none" stroke="#fff" stroke-width="1.5"/><rect x="1" y="7" width="23" height="17" fill="#fff"/><rect x="7" y="10" width="5" height="5" fill="#f25022"/><rect x="13" y="10" width="5" height="5" fill="#7fba00"/><rect x="7" y="16" width="5" height="5" fill="#00a4ef"/><rect x="13" y="16" width="5" height="5" fill="#ffb900"/></svg>
<svg class="a" style="left:650px;top:1048px" width="24" height="23" viewBox="0 0 24 23"><path d="M0 9L12 0l12 9v14H0z" fill="#0e6ac7"/><path d="M3 8h18l-9 6z" fill="#f2f2f2"/><path d="M0 9l12 8 12-8v14H0z" fill="#28a8ea"/><path d="M0 23l12-8 12 8z" fill="#1490df"/></svg>
<svg class="a" style="left:701px;top:1052px" width="20" height="16" viewBox="0 0 20 16"><rect x="0" y="0" width="20" height="15" fill="#54a9ea"/><rect x="0" y="0" width="20" height="15" fill="none" stroke="#1a5d9e" stroke-width=".8"/><circle cx="6" cy="6.5" r="3.6" fill="#1c5fb0"/><path d="M6 6.5V2.9a3.6 3.6 0 0 1 3.6 3.6z" fill="#f4c242"/><path d="M12 3h6M12 6h6M12 9h6" stroke="#fff" stroke-width="1.2"/><path d="M2 12.5h6" stroke="#f4c242" stroke-width="1.2"/><path d="M11 12.5h7" stroke="#fff" stroke-width="1.2"/></svg>
<div class="a" style="left:691px;top:1078px;width:40px;height:2px;background:#86b3e3"></div>
<div class="a" style="left:736px;top:1040px;width:48px;height:40px;background:#465662"></div>
<div class="a" style="left:736px;top:1078px;width:48px;height:2px;background:#99c3ee"></div>
<svg class="a" style="left:751px;top:1048px" width="20" height="23" viewBox="0 0 20 23"><path d="M1 1h14l2 2v19H1z" fill="#f6cf6e"/><path d="M12 4h4v18h-4z" fill="#e3b54e"/><rect x="7" y="5" width="12" height="8" fill="#f2f4f7" stroke="#9aa3ad" stroke-width=".8"/><path d="M9 8l1 1 2-2M9 11l1 1 2-2M13 8h4M13 11h4" stroke="#6b7683" stroke-width=".8" fill="none"/></svg>
<svg class="a" style="left:1660px;top:1036px" width="64" height="44" viewBox="0 0 64 44"><path d="M24.5 4H59.5L39.5 42L16 35C10 33 8.5 27 12 22Z" fill="#a8afba"/><path d="M14.2 24.6L37.5 28.8L57.8 6.5L38.5 36.8L16 30.5C13.5 29.5 13.3 26.5 14.2 24.6Z" fill="#1c2946"/><path d="M30.5 4.6L48 5.5L47 10.4L30.5 8.8Z" fill="#1c2946"/><path d="M56.5 10.5L59 10.5L59.5 19L57 20Z" fill="#a8afba"/></svg>
<div class="a nw" style="left:1732px;top:1044.5px;font-size:18px;color:#8e97a6;opacity:.85">The Collection Book</div>
<svg class="a" style="left:1713px;top:1055px" width="13" height="9" viewBox="0 0 13 9"><path d="M1 8l5.5-6.5L12 8" fill="none" stroke="#fff" stroke-width="1.1"/></svg>
<svg class="a" style="left:1735px;top:1053px" width="18" height="12" viewBox="0 0 18 12"><path d="M4 11a3.5 3.5 0 0 1 0-7c.6-2.4 2.7-4 5-4 2.6 0 4.6 1.7 5 4 2 0 3.6 1.5 3.6 3.5S16 11 14 11z" fill="#fff"/></svg>
<svg class="a" style="left:1759px;top:1054px" width="17" height="14" viewBox="0 0 17 14"><rect x="4.5" y=".5" width="12" height="9" fill="none" stroke="#fff"/><path d="M10.5 10v2.5M7 13.5h7" stroke="#fff"/><rect x=".5" y="2.5" width="5" height="3" fill="#1b2844" stroke="#fff"/><path d="M3 5.5v8" stroke="#fff"/></svg>
<svg class="a" style="left:1782px;top:1053px" width="17" height="15" viewBox="0 0 17 15"><path d="M1 5h3l4-4v13l-4-4H1z" fill="none" stroke="#fff"/><path d="M10.5 5a3 3 0 0 1 0 5M12.5 3a6 6 0 0 1 0 9M14.5 1a9 9 0 0 1 0 13" fill="none" stroke="#fff"/></svg>
<div class="a nw" style="left:1813px;top:1043px;font-size:12px;color:#fff">9:32 AM</div>
<div class="a nw" style="left:1809px;top:1061px;font-size:11.6px;color:#fff">3/22/2020</div>
<svg class="a" style="left:1879px;top:1052px" width="17" height="16" viewBox="0 0 17 16"><path d="M.5 .5h16v11H10l-2 3-2-3H.5z" fill="none" stroke="#fff"/></svg>
<div class="a" style="left:1915px;top:1040px;width:1px;height:40px;background:#5d6b80"></div>
<!--/TB-->

</body></html>
